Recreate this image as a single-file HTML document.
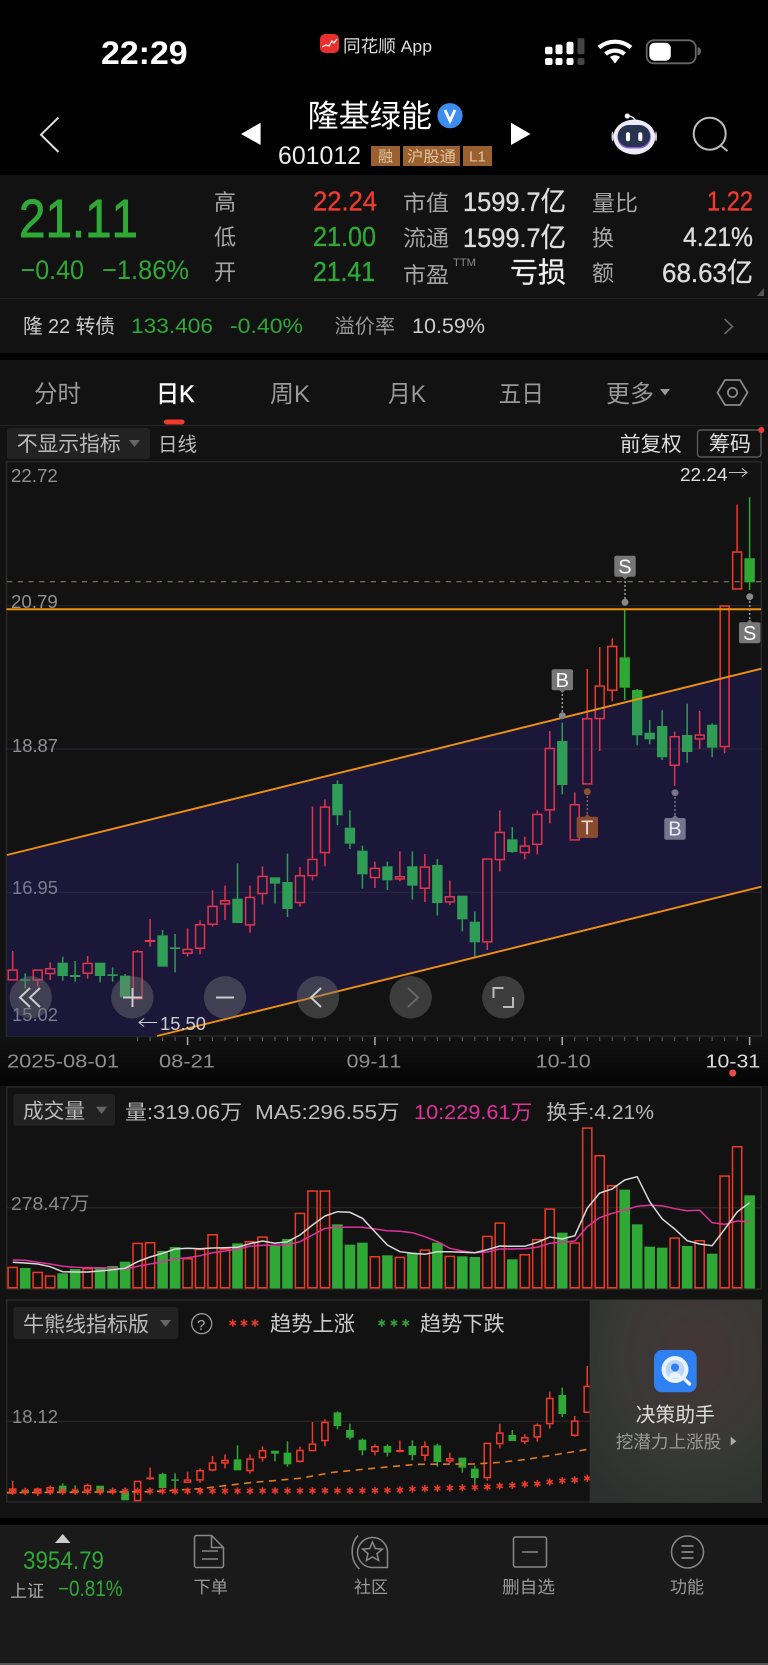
<!DOCTYPE html>
<html><head><meta charset="utf-8"><style>
html,body{margin:0;padding:0;background:#000;width:768px;height:1665px;overflow:hidden}
svg{display:block}
text{font-family:"Liberation Sans","Noto Sans CJK SC",sans-serif;font-kerning:none}
.m{stroke-width:.35px;paint-order:stroke}
</style></head><body>
<svg id="s" xmlns="http://www.w3.org/2000/svg" width="768" height="1665" viewBox="0 0 768 1665">
<defs>
<clipPath id="bandclip"><polygon points="7,855 761,669 761,887 157,1036 7,1036"/></clipPath>
<clipPath id="p3clip"><rect x="7" y="1300" width="583" height="203"/></clipPath>
<linearGradient id="axisg" x1="0" y1="0" x2="0" y2="1"><stop offset="0" stop-color="#121212"/><stop offset="1" stop-color="#050505"/></linearGradient>
<radialGradient id="cardg" cx="0.62" cy="0.28" r="0.85"><stop offset="0" stop-color="#443636"/><stop offset="0.55" stop-color="#383937"/><stop offset="1" stop-color="#2d302e"/></radialGradient>
</defs>
<rect width="768" height="1665" fill="#000"/>
<!-- status bar -->
<text x="101" y="64" font-size="32" font-weight="700" fill="#fff" textLength="86.6">22:29</text>
<rect x="320" y="34" width="19" height="19" rx="5" fill="#e8312e"/>
<path d="M322 47l4-2 3 1 3-5 2 2 3-4" fill="none" stroke="#fff" stroke-width="1.2"/>
<text x="343" y="52" font-size="17" fill="#ddd" textLength="89">同花顺 App</text>
<g fill="#fff">
<rect x="545" y="46.7" width="7.5" height="7.5" rx="2"/><rect x="555.5" y="44.5" width="7" height="9.700" rx="2"/><rect x="566.5" y="41.7" width="7" height="12.5" rx="2"/><rect x="577.5" y="38.3" width="7" height="16" rx="2" fill="#444"/>
<rect x="545" y="58" width="7.5" height="7" rx="2"/><rect x="555.5" y="58" width="7" height="7" rx="2"/><rect x="566.5" y="58" width="7" height="7" rx="2"/><rect x="577.5" y="58" width="7" height="7" rx="2" fill="#444"/>
</g>
<g fill="none" stroke="#fff" stroke-width="4.200"><path d="M599 47.500a25 25 0 0 1 32 0"/><path d="M605.500 54a15 15 0 0 1 19 0"/></g><path d="M610 57a8 8 0 0 1 10 0L615 63.500z" fill="#fff"/>
<rect x="646.700" y="40.300" width="49" height="23" rx="7" fill="none" stroke="#666" stroke-width="1.800"/>
<rect x="649.300" y="42.700" width="21.500" height="18" rx="5.500" fill="#fff"/>
<path d="M697.500 47.300a3.500 4 0 0 1 0 8z" fill="#666"/>
<!-- nav -->
<path d="M58.500 117.500L41 134.700 58.500 152" fill="none" stroke="#ddd" stroke-width="2"/>
<text x="307.600" y="127" font-size="31" fill="#fff" textLength="124.400">隆基绿能</text>
<circle cx="450" cy="115.700" r="12.600" fill="#3d8def"/>
<path d="M445 110l5 11 5-11" fill="none" stroke="#fff" stroke-width="2.800"/>
<path d="M260.600 122.700V145L241 134z" fill="#fff"/><path d="M511 122.700V145L530.500 134z" fill="#fff"/>
<text x="278" y="164" font-size="25" fill="#eee" textLength="83">601012</text>
<rect x="371" y="146" width="29" height="20" fill="#9a6030"/><rect x="403" y="146" width="57" height="20" fill="#9a6030"/><rect x="463" y="146" width="29" height="20" fill="#9a6030"/>
<text x="378" y="161.500" font-size="15" fill="#e3c3a0">融</text>
<text x="407" y="161.500" font-size="15" fill="#e3c3a0" textLength="49">沪股通</text>
<text x="469" y="161.500" font-size="15" fill="#e3c3a0" textLength="17">L1</text>
<!-- robot -->
<path d="M627.500 116c4 0 7 2 8 5" stroke="#dde" stroke-width="1.600" fill="none"/><circle cx="627.300" cy="116" r="2.600" fill="#eef"/>
<ellipse cx="612.500" cy="136.500" rx="1" ry="5" fill="#ccc"/><ellipse cx="656" cy="136.500" rx="1" ry="5" fill="#ccc"/>
<ellipse cx="634.300" cy="137" rx="21" ry="17.500" fill="#ecebf8"/>
<rect x="617.300" y="125" width="33.500" height="23.500" rx="11.700" fill="#8a5cd8"/>
<rect x="618" y="125" width="32" height="22" rx="11" fill="#283350"/>
<rect x="626" y="132.300" width="4" height="9" rx="2" fill="#fff"/><rect x="638.300" y="132.300" width="4" height="9" rx="2" fill="#fff"/>
<circle cx="709.700" cy="133.700" r="16" fill="none" stroke="#bbb" stroke-width="2"/><path d="M720.500 145.500l7 5.500" stroke="#bbb" stroke-width="2" fill="none"/>

<!-- stats -->
<rect y="175" width="768" height="123" fill="#121212"/>
<rect y="298" width="768" height="1" fill="#1f1f1f"/>
<rect y="299" width="768" height="54" fill="#121212"/>
<text x="19" y="237" font-size="54" fill="#2fa836" stroke="#2fa836" stroke-width=".9" textLength="119">21.11</text>
<text x="20.600" y="279" font-size="27" fill="#2fa836" textLength="63.400">−0.40</text>
<text x="102" y="279" font-size="27" fill="#2fa836" textLength="87">−1.86%</text>
<g font-size="22" fill="#a6a6a6"><text x="214" y="210">高</text><text x="214" y="245">低</text><text x="214" y="280">开</text>
<text x="403" y="211" textLength="46">市值</text><text x="403" y="246" textLength="46">流通</text><text x="403" y="283" textLength="46">市盈</text>
<text x="592" y="211" textLength="46">量比</text><text x="592" y="246">换</text><text x="592" y="281">额</text></g>
<text x="453" y="266" font-size="11" fill="#888" textLength="23">TTM</text>
<g font-size="28"><text class="m" x="313" y="210.500" fill="#f03a2e" stroke="#f03a2e" textLength="64">22.24</text><text class="m" x="313" y="246" fill="#2fa836" stroke="#2fa836" textLength="63">21.00</text><text class="m" x="313" y="281" fill="#2fa836" stroke="#2fa836" textLength="62">21.41</text>
<text class="m" x="707" y="210.500" fill="#f03a2e" stroke="#f03a2e" textLength="46">1.22</text></g>
<g font-size="27" fill="#ddd"><text class="m" stroke="#ddd" x="463" y="211" textLength="103">1599.7亿</text><text class="m" stroke="#ddd" x="463" y="247" textLength="103">1599.7亿</text>
<text class="m" stroke="#ddd" x="683" y="246" textLength="70">4.21%</text><text class="m" stroke="#ddd" x="662" y="282" textLength="91">68.63亿</text>
<text x="510" y="282" font-size="28" fill="#eee" stroke="#eee" stroke-width=".3" textLength="56">亏损</text></g>
<path d="M764 288v8h-7z" fill="#555"/>
<text x="23" y="333" font-size="20" fill="#ccc" textLength="92">隆 22 转债</text>
<text x="131" y="333" font-size="21" fill="#2fa836" textLength="82">133.406</text>
<text x="230" y="333" font-size="21" fill="#2fa836" textLength="73">-0.40%</text>
<text x="334.500" y="333" font-size="20" fill="#999" textLength="60.500">溢价率</text>
<text x="412" y="333" font-size="21" fill="#ccc" textLength="73">10.59%</text>
<path d="M724.500 319l8 7.500-8 7.500" fill="none" stroke="#666" stroke-width="1.600"/>

<!-- chart bg -->
<rect y="360" width="768" height="1158" fill="#121212"/>
<g font-size="24" fill="#999"><text x="34" y="402" textLength="47">分时</text><text x="270" y="402" textLength="40">周K</text><text x="388" y="402" textLength="38">月K</text><text x="498.600" y="402" textLength="45.400">五日</text><text x="606" y="402" textLength="48">更多</text></g>
<text x="156" y="402" font-size="24" fill="#fff" stroke="#fff" stroke-width=".5" textLength="38.500">日K</text>
<path d="M660 389h10l-5 6.500z" fill="#999"/>
<path d="M725 380h15l7.500 12.500-7.500 12.500h-15l-7.500-12.500z" fill="none" stroke="#888" stroke-width="1.800"/><circle cx="732.500" cy="392.500" r="4.600" fill="none" stroke="#888" stroke-width="1.800"/>
<rect x="164" y="419.500" width="20.600" height="5" rx="2.500" fill="#f03a2e"/>
<rect y="425" width="768" height="1" fill="#252525"/>
<rect x="7" y="428" width="143" height="31" rx="3" fill="#222"/>
<text x="16.700" y="451" font-size="21" fill="#bbb" textLength="104">不显示指标</text>
<path d="M129 440h11l-5.500 7z" fill="#666"/>
<text x="158" y="451" font-size="19.500" fill="#bbb" textLength="39">日线</text>
<text x="620" y="451" font-size="20.500" fill="#ddd" textLength="61.700">前复权</text>
<rect x="697.500" y="430" width="63.500" height="27" rx="3" fill="none" stroke="#666" stroke-width="1.200"/>
<text x="709" y="451" font-size="21" fill="#ddd" textLength="42">筹码</text>
<circle cx="761.300" cy="430" r="3" fill="#f03a3a"/>

<!-- main chart -->
<polygon points="7,855 761,669 761,887 157,1036 7,1036" fill="#1a1738"/>
<rect x="6.500" y="461.700" width="754.800" height="574.300" fill="none" stroke="#282828" stroke-width="1.500"/>
<g stroke="#262626" stroke-width="1"><path d="M7 605.700H761"/></g>
<path d="M7 749H761M7 892.300H761" stroke="#2a2840" stroke-width="1"/>
<path d="M7 581.700H761" stroke="#8a7a60" stroke-width="1.100" stroke-dasharray="5.200 5.500"/>
<g id="mainc"></g>
<g font-size="18.500" fill="#909090"><text x="11" y="482" textLength="46.700">22.72</text><text x="11" y="608" textLength="46.700">20.79</text><text x="12" y="752" textLength="46">18.87</text><text x="12" y="894" textLength="46" fill="#7c7a90">16.95</text><text x="12" y="1021" textLength="46" fill="#7c7a90">15.02</text></g>
<path d="M7 855L761.300 668.700M157 1036L761.300 886.700" stroke="#ee8f0e" stroke-width="1.900" fill="none"/>
<path d="M6.500 609.300H761" stroke="#ee8f0e" stroke-width="2"/>
<text x="680" y="481" font-size="18.500" fill="#ddd" textLength="47.500">22.24</text>
<path d="M729 472.500h18m-5-4l5 4-5 4" stroke="#bbb" stroke-width="1.100" fill="none"/>
<path d="M157 1022.500h-18m5-4l-5 4 5 4" stroke="#ccc" stroke-width="1.100" fill="none"/>
<text x="160" y="1030" font-size="18.500" fill="#ccc" textLength="46">15.50</text>
<!-- markers -->
<g stroke-dasharray="2 2" stroke-width="1.500" fill="none">
<path d="M625 577V601M749.700 597V622M562.300 690V715" stroke="#999"/><path d="M587.300 792V817" stroke="#8a5a40"/><path d="M675 793V818" stroke="#76748e"/>
</g>
<circle cx="625" cy="602.300" r="3.500" fill="#888"/><circle cx="749.700" cy="596.700" r="3.500" fill="#888"/><circle cx="562.300" cy="715.700" r="3.500" fill="#888"/><circle cx="587.300" cy="791.700" r="3.500" fill="#8a5232"/><circle cx="675" cy="792.700" r="3.500" fill="#76748e"/>
<g font-size="20">
<path d="M622 576.500h6l-3 3z" fill="#777"/><path d="M746.700 622.500h6l-3-3z" fill="#777"/><path d="M559.300 690h6l-3 3z" fill="#777"/><path d="M584.300 817h6l-3-3z" fill="#8a4a30"/><path d="M672 818h6l-3-3z" fill="#76748e"/>
<rect x="614.300" y="555.700" width="21.400" height="21" rx="2" fill="#777"/><text x="618.300" y="573.300" fill="#fff">S</text>
<rect x="739" y="622.300" width="21.400" height="21" rx="2" fill="#777"/><text x="743" y="640" fill="#fff">S</text>
<rect x="551.600" y="669.300" width="21.400" height="21" rx="2" fill="#777"/><text x="555.600" y="687" fill="#fff">B</text>
<rect x="576.600" y="816.700" width="21.400" height="21.300" rx="2" fill="#8a4a30"/><text x="581" y="834.300" fill="#e8d8d0">T</text>
<rect x="664.300" y="818" width="21.400" height="21.700" rx="2" fill="#76748e"/><text x="668.300" y="835.700" fill="#e8e8f0">B</text>
</g>
<!-- buttons -->
<g fill="rgba(120,120,120,.42)"><circle cx="30.700" cy="997.300" r="21.200"/><circle cx="132.300" cy="997.300" r="21.200"/><circle cx="225" cy="997.300" r="21.200"/><circle cx="318" cy="997.300" r="21.200"/><circle cx="410.700" cy="997.300" r="21.200"/><circle cx="503.300" cy="997.300" r="21.200"/></g>
<g fill="none" stroke="#ccc" stroke-width="2">
<path d="M30 988l-10 9.500 10 9.500M40 988l-10 9.500 10 9.500"/>
<path d="M123 997.500h19M132.500 988v19"/>
<path d="M216 997.500h18"/>
<path d="M321 988l-10 9.500 10 9.500"/>
<path d="M408 988l10 9.500-10 9.500" stroke="#666"/>
<path d="M493.500 998v-10h10M513 997v10h-10" stroke="#bbb"/>
</g>
<!-- axis -->
<rect x="0" y="1037" width="768" height="49" fill="url(#axisg)"/>
<g id="ticks" stroke="#777" stroke-width="1"></g>
<g font-size="18.500" fill="#8f8f8f"><text x="7" y="1067.500" textLength="112">2025-08-01</text><text x="159" y="1067.500" textLength="56">08-21</text><text x="346.700" y="1067.500" textLength="54.500">09-11</text><text x="535.700" y="1067.500" textLength="55">10-10</text></g>
<text x="705.700" y="1067.500" font-size="18.500" fill="#ddd" textLength="54.500">10-31</text>
<circle cx="732.700" cy="1073" r="3.500" fill="#f04848"/>

<!-- volume -->
<rect x="6.700" y="1087" width="754.600" height="202" fill="#121212" stroke="#282828" stroke-width="1.500"/>
<rect x="13.300" y="1094" width="101.700" height="31.700" rx="3" fill="#222"/>
<text x="23" y="1118" font-size="20.500" fill="#bbb" textLength="62">成交量</text>
<path d="M96 1106.700h11l-5.500 7.300z" fill="#666"/>
<text x="125" y="1119" font-size="20" fill="#bbb" textLength="117">量:319.06万</text>
<text x="255" y="1119" font-size="20" fill="#bbb" textLength="144.700">MA5:296.55万</text>
<text x="414" y="1119" font-size="20" fill="#e0309c" textLength="118.300">10:229.61万</text>
<text x="546.300" y="1119" font-size="20" fill="#bbb" textLength="107.700">换手:4.21%</text>
<path d="M7 1207.700H761" stroke="#2a2a2a" stroke-width="1"/>
<g id="vol"></g>
<text x="11" y="1210" font-size="18.500" fill="#8a8a8a" textLength="78.300">278.47万</text>

<!-- panel 3 -->
<rect x="6.700" y="1300" width="754.600" height="202" fill="#121212" stroke="#282828" stroke-width="1.500"/>
<rect x="13.300" y="1307" width="165" height="32" rx="3" fill="#222"/>
<text x="23" y="1331.500" font-size="21" fill="#bbb" textLength="126">牛熊线指标版</text>
<path d="M160 1320h11l-5.500 7z" fill="#666"/>
<circle cx="201.700" cy="1323.700" r="10" fill="none" stroke="#999" stroke-width="1.300"/>
<text x="197" y="1330" font-size="15" fill="#aaa">?</text>
<text x="270" y="1331" font-size="21" fill="#ccc" textLength="85">趋势上涨</text>
<text x="420" y="1331" font-size="21" fill="#ccc" textLength="84.700">趋势下跌</text>
<path d="M7 1421.300H761" stroke="#2a2a2a" stroke-width="1"/>
<text x="12" y="1423" font-size="18.500" fill="#8a8a8a" textLength="46">18.12</text>
<g id="p3"></g>
<rect x="589.700" y="1300" width="172" height="203" fill="url(#cardg)"/>
<rect x="654" y="1350" width="42.700" height="42.300" rx="8" fill="#2f80f0"/>
<circle cx="675" cy="1369.500" r="13.500" fill="#eaf3ff"/><circle cx="675" cy="1369.500" r="9.500" fill="#bcd6fa"/>
<circle cx="675" cy="1367.500" r="4" fill="#2f80f0"/><path d="M669 1378a6 6 0 0 1 12 0z" fill="#eaf3ff"/>
<path d="M684.500 1379l5 5" stroke="#eaf3ff" stroke-width="3.400" stroke-linecap="round"/>
<text x="635.700" y="1421.500" font-size="20" fill="#ddd" textLength="79">决策助手</text>
<text x="615.700" y="1448" font-size="17.600" fill="#999" textLength="105.600">挖潜力上涨股</text>
<path d="M730.700 1436.700l5.600 4.500-5.600 4.500z" fill="#aaa"/>

<!-- bottom bar -->
<rect y="1518" width="768" height="7" fill="#000"/>
<rect y="1525" width="768" height="140" fill="#1a1a1a"/>
<rect y="1663" width="768" height="2" fill="#555"/>
<path d="M55 1543l7.700-9 7.800 9z" fill="#ccc"/>
<text x="23" y="1569" font-size="25" fill="#2fa836" textLength="81">3954.79</text>
<text x="10" y="1597" font-size="17" fill="#aaa" textLength="34">上证</text>
<text x="58" y="1596" font-size="22" fill="#2fa836" textLength="64.500">−0.81%</text>
<g fill="none" stroke="#888" stroke-width="1.500">
<path d="M196.500 1535.500h15l12 12v18a2 2 0 0 1-2 2h-25a2 2 0 0 1-2-2v-28a2 2 0 0 1 2-2zM211.500 1535.500v12h12"/><path d="M202 1551h16M202 1559h16"/>
<path d="M387.500 1567.500H373a15 15 0 1 1 14.500-16z"/><path d="M358 1535.500c-8 9-8 25 1.500 33.500"/>
<path d="M372.500 1542l2.800 6.500 7 .6-5.300 4.600 1.600 6.800-6.100-3.600-6.100 3.600 1.600-6.800-5.300-4.600 7-.6z"/>
<rect x="513.500" y="1537" width="33" height="30" rx="2"/><path d="M522 1552h16"/>
<circle cx="687.500" cy="1552" r="16"/><path d="M681.500 1546h12M681.500 1552h12M681.500 1558h12" stroke-width="1.800"/>
</g>
<g font-size="17" fill="#999"><text x="193.500" y="1593" textLength="34.500">下单</text><text x="354" y="1593" textLength="34">社区</text><text x="502" y="1593" textLength="53">删自选</text><text x="670" y="1593" textLength="34">功能</text></g>
</svg>
<script>
var NS="http://www.w3.org/2000/svg";
document.querySelectorAll('text[textLength]').forEach(function(t){t.setAttribute('lengthAdjust','spacingAndGlyphs')});
var ty="rgrrggrggg"+"rrggrrrrgr"+"rggrrrgggr"+"grgrgrggrr"+"grrrgrrrrg"+"gggrgrgrrg";
function X(i){return 12.7+12.49*i}
function mk(g,n,a){var e=document.createElementNS(NS,n);for(var k in a)e.setAttribute(k,a[k]);g.appendChild(e);return e}
var Z=function(v){return 740+v/3};
var m=[[633,688,722,722],[700,718,722,745],[690,688,722,740],[667,684,703,720],[650,668,708,722],[663,705,711,725],[648,668,702,716],[668,668,708,727],[682,703,708,725],[702,707,772,772],[630,633,778,780],[537,600,604,620],[570,586,680,680],[582,622,627,697],[565,626,642,650],[541,552,627,643],[451,497,555,560],[437,480,494,540],[370,476,549,549],[437,470,557,578],[379,407,463,493],[412,412,431,491],[341,426,507,531],[381,405,490,500],[200,356,409,421],[178,199,340,379],[121,132,226,255],[211,263,311,327],[317,332,403,446],[365,383,415,444],[365,379,421,450],[334,408,419,424],[334,379,437,479],[342,379,447,486],[357,375,489,527],[422,468,488,495],[467,467,538,574],[514,545,607,650],[355,355,608,630],[211,275,361,394],[261,298,336,338],[290,316,340,358],[211,221,315,343],[-27,23,212,250],[-52,3,135,163],[157,192,302,302]].map(function(a){return a.map(Z)});
m=m.concat([[669,718,784.7,784.7],[647,685.3,719.3,751],[638.3,645.7,691,701.3],[610,657.3,687.7,700],[689,690,735.3,745.3],[720,732.7,739.3,744.3],[710.3,726,757.3,760],[731.7,736,766,785.7],[703.7,735,752,762.7],[711,734.3,739.7,749],[723.3,724.7,747.7,757.3],[605,605.3,747.3,753.3],[504.7,551.3,589.7,589.7],[497.3,558.3,582.3,590]]);
function cand(g,d,i,w,R,G){var x=X(i),r=ty[i]=='r',c=r?R:G;
 if(d[0]<d[1])mk(g,'line',{x1:x,x2:x,y1:d[0],y2:d[1],stroke:c,'stroke-width':1.5});
 if(d[3]>d[2])mk(g,'line',{x1:x,x2:x,y1:d[2],y2:d[3],stroke:c,'stroke-width':1.5});
 if(r)mk(g,'rect',{x:x-w/2+.75,y:d[1]+.75,width:w-1.5,height:Math.max(d[2]-d[1]-1.5,.5),fill:'none',stroke:c,'stroke-width':1.5});
 else mk(g,'rect',{x:x-w/2,y:d[1],width:w,height:Math.max(d[2]-d[1],1.5),fill:c});}
var gm=document.getElementById('mainc');
var outer=mk(gm,'g',{}),inner=mk(gm,'g',{'clip-path':'url(#bandclip)'});
mk(inner,'polygon',{points:'7,855 761,669 761,887 157,1036 7,1036',fill:'#1a1738'});
[749,892.3].forEach(function(y){mk(inner,'line',{x1:7,x2:761,y1:y,y2:y,stroke:'#2a2840','stroke-width':1})});
m.forEach(function(d,i){cand(outer,d,i,10.4,'#ef3a2c','#2fa836');cand(inner,d,i,10.4,'#e2344f','#2f9d55')});
// ticks
var tg=document.getElementById('ticks');
for(var i=10;i<60;i++){var big=(i==14||i==29||i==44||i==59);mk(tg,'line',{x1:X(i),x2:X(i),y1:1037,y2:big?1045:1041,'stroke-width':big?1.5:1,stroke:big?'#aaa':'#666'})}
// volume
var vt=[545,549,560,571,565,552,549,549,543,530,473,471,498,486,519,491,447,490,475,468,454,483,462,383,316,316,418,479,473,513,511,515,505,493,473,512,514,516,452,412,523,507,462,370,443,472,127,210,300,314,418,485,488,457,483,465,506,271,183,331];
var W=[532,534,537,545,560,561,561,558,554,550,530,516,505,492,490,491,489,488,487,476,468,475,470,450,420,393,380,382,400,440,480,500,505,508,500,500,502,503,494,483,484,484,472,456,462,452,370,324,312,285,275,350,402,432,467,477,482,433,381,353];
var P=[525,526,532,537,544,547,548,548,549,553,544,537,530,521,518,512,503,498,492,484,481,481,479,470,450,430,427,427,427,432,437,439,443,455,470,490,498,503,501,492,492,491,487,475,472,468,425,398,385,375,364,361,362,371,377,376,413,418,408,410];
var gv=document.getElementById('vol');
function VY(z){return 1085+z/3}
vt.forEach(function(z,i){var x=X(i),y=VY(z),b=1288.5;
 if(ty[i]=='r')mk(gv,'rect',{x:x-4.6,y:y+.75,width:9.2,height:b-y-1.5,fill:'none',stroke:'#ee3a24','stroke-width':1.5});
 else mk(gv,'rect',{x:x-5.3,y:y,width:10.6,height:b-y,fill:'#2fa836'});});
function pl(a){return a.map(function(z,i){return X(i).toFixed(1)+','+VY(z).toFixed(1)}).join(' ')}
mk(gv,'polyline',{points:pl(P),fill:'none',stroke:'#e0309c','stroke-width':1.5});
mk(gv,'polyline',{points:pl(W),fill:'none',stroke:'#d8d8d8','stroke-width':1.5});
// panel 3
var Y3=function(v){return 1290+v/3};
var p3=[[573,595,611,611],[597,600,610,613],[595,595,611,618],[587,591,605,613],[580,587,605,612],[586,602,607,612],[581,585,603,608],[587,587,606,612],[595,603,607,612],[603,603,631,631],[572,572,634,634],[533,562,566,570],[548,552,594,594],[550,568,571,602],[545,568,579,579],[536,540,572,578],[498,517,542,544],[493,509,521,535],[466,508,541,541],[493,505,544,551],[469,480,505,515],[482,482,491,514],[454,488,523,530],[470,479,516,518],[396,460,484,484],[388,395,454,469],[364,367,408,418],[401,420,443,449],[445,449,481,496],[463,468,486,496],[463,468,488,499],[451,480,484,487],[451,468,495,511],[454,468,498,513],[461,466,516,530],[488,504,515,520],[503,503,533,548],[527,536,564,583],[458,458,565,572],[401,427,463,475],[420,435,453,453],[433,441,456,462],[400,404,443,455],[305,323,403,416],[293,315,372,381],[378,391,438,440],[228,287,369,369]];
var g3=mk(document.getElementById('p3'),'g',{'clip-path':'url(#p3clip)'});
p3.forEach(function(d,i){cand(g3,d.map(Y3),i,7.7,'#ef3a2c','#2fa836')});
mk(g3,'polyline',{points:'7,1492.7 150,1491.7 200,1488.7 250,1482.7 300,1478.3 333,1472.3 384,1467.3 417,1464.3 474,1464 501,1462.3 527,1459.3 590,1449',fill:'none',stroke:'#e07a1c','stroke-width':1.6,'stroke-dasharray':'7 5.5'});
function star(g,x,y,r,c){for(var a=0;a<3;a++){var t=a*Math.PI/3+Math.PI/2,dx=r*Math.cos(t),dy=r*Math.sin(t);mk(g,'line',{x1:x-dx,y1:y-dy,x2:x+dx,y2:y+dy,stroke:c,'stroke-width':1.5})}}
var ds=[601,600,597,596,595,594,593,592,591,588,586,583,581,576,572,570,565];
for(var i=0;i<47;i++){var z=i<30?604-i*0.07:ds[Math.min(i-30,16)];star(g3,X(i),1290+z/3,3.6,'#ef3a2c')}
var top3=document.getElementById('p3');
[232.7,244,255].forEach(function(x){star(top3,x,1323,3.8,'#ef3a2c')});
[381.7,394,405.7].forEach(function(x){star(top3,x,1323,3.8,'#2fa836')});
</script>
</body></html>
